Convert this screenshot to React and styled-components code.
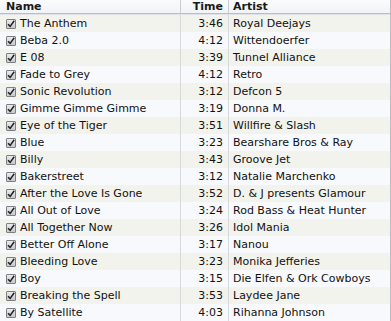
import styled, { createGlobalStyle } from "styled-components";

const GlobalStyle = createGlobalStyle`
  html, body {
    margin: 0;
    padding: 0;
    background: #f7f9fc;
  }
  body {
    font-family: "DejaVu Sans", "Liberation Sans", sans-serif;
  }
`;

const tracks = [
  ["The Anthem", "3:46", "Royal Deejays"],
  ["Beba 2.0", "4:12", "Wittendoerfer"],
  ["E 08", "3:39", "Tunnel Alliance"],
  ["Fade to Grey", "4:12", "Retro"],
  ["Sonic Revolution", "3:12", "Defcon 5"],
  ["Gimme Gimme Gimme", "3:19", "Donna M."],
  ["Eye of the Tiger", "3:51", "Willfire & Slash"],
  ["Blue", "3:23", "Bearshare Bros & Ray"],
  ["Billy", "3:43", "Groove Jet"],
  ["Bakerstreet", "3:12", "Natalie Marchenko"],
  ["After the Love Is Gone", "3:52", "D. & J presents Glamour"],
  ["All Out of Love", "3:24", "Rod Bass & Heat Hunter"],
  ["All Together Now", "3:26", "Idol Mania"],
  ["Better Off Alone", "3:17", "Nanou"],
  ["Bleeding Love", "3:23", "Monika Jefferies"],
  ["Boy", "3:15", "Die Elfen & Ork Cowboys"],
  ["Breaking the Spell", "3:53", "Laydee Jane"],
  ["By Satellite", "4:03", "Rihanna Johnson"],
];

const Table = styled.div`
  width: 391px;
  height: 321px;
  overflow: hidden;
  display: flex;
  flex-direction: column;
  box-sizing: border-box;
  border-right: 1px solid #b9bcc0;
`;

const Header = styled.div`
  display: grid;
  grid-template-columns: 181px 48px 1fr;
  height: 13px;
  background: linear-gradient(#fafbfd, #f1f3f6);
  border-bottom: 1px solid #babfc6;
  box-shadow: 0 1px 0 #dfe2e6;
  margin-bottom: 1px;
`;

const HeadCell = styled.div`
  font-size: 11px;
  font-weight: bold;
  line-height: 13px;
  color: #1a1a1a;
  padding: 0 ${(p) => (p.$right ? "5px" : "4px")};
  padding-left: ${(p) => (p.$first ? "6px" : undefined)};
  text-align: ${(p) => (p.$right ? "right" : "left")};
  border-right: ${(p) => (p.$last ? "none" : "1px solid #c9ccd1")};
  white-space: nowrap;
  overflow: hidden;
`;

const Row = styled.div`
  display: grid;
  grid-template-columns: 181px 48px 1fr;
  height: 17px;
  background: ${(p) => (p.$odd ? "#f3f3ed" : "#f7f9fc")};
`;

const Cell = styled.div`
  display: flex;
  align-items: center;
  justify-content: ${(p) => (p.$right ? "flex-end" : "flex-start")};
  font-size: 11px;
  color: #111;
  padding: 0 ${(p) => (p.$right ? "5px" : "4px")};
  border-right: ${(p) => (p.$last ? "none" : "1px solid #d6d8da")};
  white-space: nowrap;
  overflow: hidden;
`;

const NameCell = styled(Cell)`
  padding-left: 6px;
  gap: 4px;
`;

const Check = styled.span`
  flex: none;
  width: 10px;
  height: 10px;
  box-sizing: border-box;
  border: 1px solid #7d7f83;
  border-radius: 1px;
  background: linear-gradient(#e9eaec, #c6c8cc);
  display: flex;
  align-items: center;
  justify-content: center;
`;

function CheckBox() {
  return (
    <Check>
      <svg width="8" height="8" viewBox="0 0 8 8">
        <path d="M1 4.2 L3.2 6.4 L7.2 0.8" fill="none" stroke="#222" strokeWidth="1.5" />
      </svg>
    </Check>
  );
}

export default function App() {
  return (
    <>
      <GlobalStyle />
      <Table>
        <Header>
          <HeadCell $first>Name</HeadCell>
          <HeadCell $right>Time</HeadCell>
          <HeadCell $last>Artist</HeadCell>
        </Header>
        {tracks.map((t, i) => (
          <Row key={t[0]} $odd={i % 2 === 0}>
            <NameCell>
              <CheckBox />
              {t[0]}
            </NameCell>
            <Cell $right>{t[1]}</Cell>
            <Cell $last>{t[2]}</Cell>
          </Row>
        ))}
      </Table>
    </>
  );
}
